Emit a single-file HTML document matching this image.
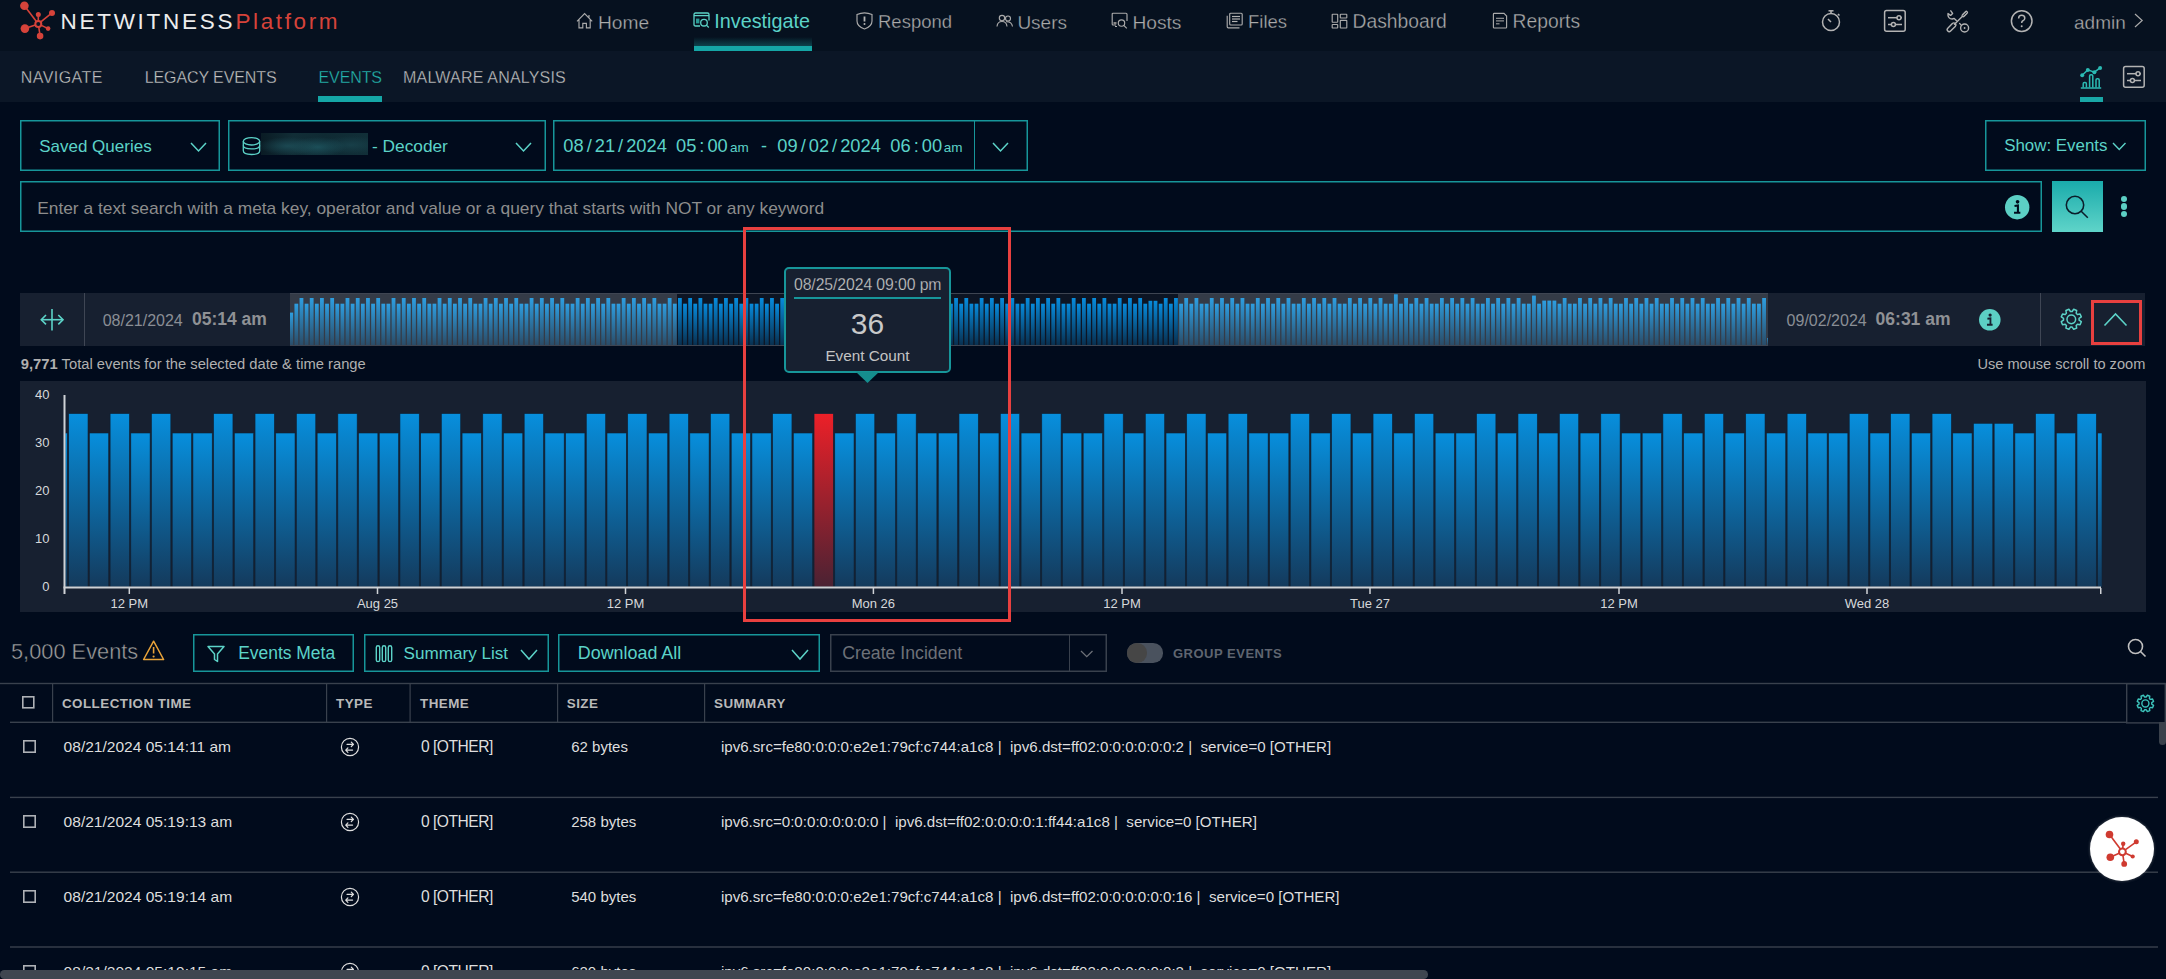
<!DOCTYPE html>
<html><head><meta charset="utf-8"><style>
html,body{margin:0;padding:0;width:2166px;height:979px;overflow:hidden;background:#010b1c;font-family:"Liberation Sans", sans-serif;}
.t{position:absolute;white-space:nowrap;line-height:1;font-family:"Liberation Sans", sans-serif;}
svg{overflow:visible}
</style></head><body>
<div style="position:absolute;left:0px;top:0px;width:2166px;height:51px;background:#06111f"></div><div style="position:absolute;left:0px;top:51px;width:2166px;height:51px;background:#0b1626"></div><svg style="position:absolute;left:0px;top:0px;" width="70" height="50" viewBox="0 0 70 50">
<g stroke="#d6433a" stroke-width="1.6" fill="none">
<line x1="24.4" y1="5.8" x2="38.3" y2="23.9"/><line x1="52" y1="12.9" x2="38.3" y2="23.9"/>
<line x1="38.3" y1="14.4" x2="38.3" y2="23.9"/><line x1="24.9" y1="28.6" x2="38.3" y2="23.9"/>
<line x1="48.1" y1="28.6" x2="38.3" y2="23.9"/><line x1="40.1" y1="36.1" x2="38.3" y2="23.9"/>
</g>
<circle cx="38.3" cy="23.9" r="3" stroke="#d6433a" stroke-width="2" fill="#0a1322"/>
<g fill="#d6433a">
<circle cx="24.4" cy="5.8" r="4.3"/><circle cx="52" cy="12.9" r="3"/><circle cx="38.3" cy="14.4" r="2.5"/>
<circle cx="24.9" cy="28.6" r="4.3"/><circle cx="48.1" cy="28.6" r="2.3"/><circle cx="40.1" cy="36.1" r="3.3"/>
</g></svg><div class="t" style="left:60.5px;top:11.45px;font-size:22.5px;color:#ececec;font-weight:400;letter-spacing:2.72px;">NETWITNESS</div><div class="t" style="left:235.5px;top:11.45px;font-size:22.5px;color:#d6433a;font-weight:400;letter-spacing:2.6px;">Platform</div><div class="t" style="left:598px;top:12.55px;font-size:19.2px;color:#ababab;font-weight:400;letter-spacing:0px;-webkit-text-stroke:0.3px #06111f;">Home</div><div class="t" style="left:714.3px;top:12.04px;font-size:19.8px;color:#5cd3c8;font-weight:400;letter-spacing:0px;">Investigate</div><div class="t" style="left:878px;top:13.14px;font-size:18.5px;color:#ababab;font-weight:400;letter-spacing:0px;-webkit-text-stroke:0.3px #06111f;">Respond</div><div class="t" style="left:1017.4px;top:12.72px;font-size:19px;color:#ababab;font-weight:400;letter-spacing:0px;-webkit-text-stroke:0.3px #06111f;">Users</div><div class="t" style="left:1132.4px;top:12.55px;font-size:19.2px;color:#ababab;font-weight:400;letter-spacing:0px;-webkit-text-stroke:0.3px #06111f;">Hosts</div><div class="t" style="left:1248px;top:13.14px;font-size:18.5px;color:#ababab;font-weight:400;letter-spacing:0px;-webkit-text-stroke:0.3px #06111f;">Files</div><div class="t" style="left:1352.5px;top:12.46px;font-size:19.3px;color:#ababab;font-weight:400;letter-spacing:0px;-webkit-text-stroke:0.3px #06111f;">Dashboard</div><div class="t" style="left:1512.6px;top:12.46px;font-size:19.3px;color:#ababab;font-weight:400;letter-spacing:0px;-webkit-text-stroke:0.3px #06111f;">Reports</div><div class="t" style="left:2074px;top:12.72px;font-size:19px;color:#ababab;font-weight:400;letter-spacing:0px;-webkit-text-stroke:0.3px #06111f;">admin</div><svg style="position:absolute;left:576px;top:12px;" width="18" height="18" viewBox="0 0 18 18"><path d="M1 9.3 L8.6 1.5 L16.2 9.3 M3 7.4 V15.9 H6.8 V11.3 H10.4 V15.9 H14.2 V7.4 M13 3 V5.6" fill="none" stroke="#ababab" stroke-width="1.15"/></svg><svg style="position:absolute;left:692px;top:11px;" width="19" height="19" viewBox="0 0 19 19"><g fill="none" stroke="#5cd3c8" stroke-width="1.3"><path d="M8 15 H3.5 Q2 15 2 13.5 V3.5 Q2 2 3.5 2 H15.5 Q17 2 17 3.5 V9.5"/><line x1="2" y1="4.6" x2="17" y2="4.6"/><circle cx="12" cy="11.7" r="3.3"/><line x1="14.4" y1="14.1" x2="16.8" y2="16.5"/></g><rect x="4" y="7.6" width="3.4" height="4.8" fill="#2a9a95"/></svg><div style="position:absolute;left:694px;top:37px;width:118px;height:9px;background:linear-gradient(to bottom, rgba(26,160,160,0), rgba(26,160,160,0.35))"></div><div style="position:absolute;left:694px;top:46px;width:118px;height:5.2px;background:#15a6a6"></div><svg style="position:absolute;left:855px;top:11px;" width="19" height="19" viewBox="0 0 19 19"><path d="M2 3.5 Q9.5 0.3 17 3.5 V10 Q17 15.5 9.5 18 Q2 15.5 2 10 Z" fill="none" stroke="#ababab" stroke-width="1.15"/><line x1="9.5" y1="5.5" x2="9.5" y2="10.5" stroke="#b3b3b3" stroke-width="1.8"/><circle cx="9.5" cy="13" r="1" fill="#b3b3b3"/></svg><svg style="position:absolute;left:996px;top:14px;" width="18" height="14" viewBox="0 0 18 14"><g fill="none" stroke="#ababab" stroke-width="1.15"><circle cx="6" cy="4" r="2.7"/><path d="M1 12.5 Q1.5 7.5 6 7.5 Q10.5 7.5 11 12.5"/><circle cx="12" cy="4.5" r="2.5"/><path d="M10 7.8 Q15.8 7.5 16.5 12.5"/></g></svg><svg style="position:absolute;left:1111px;top:12px;" width="18" height="18" viewBox="0 0 18 18"><g fill="none" stroke="#ababab" stroke-width="1.15"><path d="M5 13 H2 Q1.2 13 1.2 12 V2.2 Q1.2 1.2 2 1.2 H15 Q16 1.2 16 2.2 V9"/><circle cx="10.5" cy="11" r="3.2"/><line x1="12.8" y1="13.3" x2="15.8" y2="16.3"/></g><rect x="2.5" y="10" width="3" height="2.3" fill="#888"/><line x1="4" y1="14.5" x2="6" y2="14.5" stroke="#b3b3b3" stroke-width="1"/></svg><svg style="position:absolute;left:1226px;top:12px;" width="18" height="17" viewBox="0 0 18 17"><g fill="none" stroke="#ababab" stroke-width="1.15"><rect x="3.7" y="1.2" width="12.5" height="11.8" rx="1"/><path d="M1.2 3.8 V14.8 Q1.2 15.8 2.2 15.8 H13.5"/></g><g stroke="#b3b3b3" stroke-width="1.2"><line x1="6" y1="4.5" x2="14" y2="4.5"/><line x1="6" y1="7" x2="14" y2="7"/><line x1="6" y1="9.5" x2="11.5" y2="9.5"/></g></svg><svg style="position:absolute;left:1331px;top:13px;" width="17" height="16" viewBox="0 0 17 16"><g fill="none" stroke="#ababab" stroke-width="1.15"><rect x="1.2" y="1.2" width="5.5" height="8" rx="0.5"/><rect x="9.3" y="1.2" width="6.5" height="3.8" rx="0.5"/><rect x="1.2" y="11.5" width="5.5" height="3.5" rx="0.5"/><rect x="9.3" y="7.3" width="6.5" height="7.7" rx="0.5"/></g></svg><svg style="position:absolute;left:1492px;top:12px;" width="17" height="17" viewBox="0 0 17 17"><g fill="none" stroke="#ababab" stroke-width="1.15"><path d="M1.4 2.2 Q1.4 1.4 2.2 1.4 H12 L14.6 4 V15.2 Q14.6 16 13.8 16 H2.2 Q1.4 16 1.4 15.2 Z"/></g><g stroke="#a0a0a0" stroke-width="1.1"><line x1="4" y1="6.3" x2="12" y2="6.3"/><line x1="4" y1="8.9" x2="12" y2="8.9"/><line x1="4" y1="11.8" x2="7.5" y2="11.8"/></g></svg><svg style="position:absolute;left:1818px;top:8px;" width="26" height="26" viewBox="0 0 26 26"><g fill="none" stroke="#b3b3b3" stroke-width="1.5"><circle cx="13" cy="14" r="8.5"/><line x1="13" y1="2.8" x2="13" y2="5.5"/><line x1="10.5" y1="2.8" x2="15.5" y2="2.8"/><line x1="20" y1="6" x2="21.5" y2="7.5"/><line x1="10" y1="11" x2="13" y2="14"/></g></svg><svg style="position:absolute;left:1883px;top:9px;" width="24" height="24" viewBox="0 0 24 24"><g fill="none" stroke="#b3b3b3" stroke-width="1.5"><rect x="1.6" y="1.6" width="20.6" height="20.6" rx="2"/><line x1="5" y1="8.7" x2="19" y2="8.7"/><line x1="5" y1="15.5" x2="19" y2="15.5"/><circle cx="16" cy="8.7" r="2" fill="#06111f"/><circle cx="10.4" cy="15.5" r="2" fill="#06111f"/></g></svg><svg style="position:absolute;left:1946px;top:9px;" width="25" height="25" viewBox="0 0 25 25"><g stroke="#b3b3b3" fill="none" stroke-linecap="round"><line x1="3.2" y1="20.6" x2="7.8" y2="16" stroke-width="5.4"/><line x1="3.2" y1="20.6" x2="7.8" y2="16" stroke="#06111f" stroke-width="2.6"/><line x1="8.5" y1="15.3" x2="17.5" y2="6.3" stroke-width="1.4"/><line x1="17.3" y1="6.5" x2="20.3" y2="3.5" stroke-width="3.6"/><line x1="17.3" y1="6.5" x2="20.3" y2="3.5" stroke="#06111f" stroke-width="1"/><path d="M4.8 1.8 L6.6 4.4 L4.6 6.4 L2 4.6 Q1.6 8.4 4.4 9.6 Q6.4 10.4 8.2 9.4 L10.4 11.4" stroke-width="1.4" stroke-linejoin="round"/><path d="M13.6 14.4 L15.6 16.6" stroke-width="1.4"/><circle cx="18.6" cy="19" r="4" stroke-width="1.4"/><circle cx="18.6" cy="19" r="0.9" fill="#b3b3b3" stroke="none"/></g></svg><svg style="position:absolute;left:2009px;top:8px;" width="26" height="26" viewBox="0 0 26 26"><circle cx="12.7" cy="13.1" r="10.3" fill="none" stroke="#b3b3b3" stroke-width="1.5"/><path d="M9.6 10.5 Q9.6 7.3 12.7 7.3 Q15.8 7.3 15.8 10.2 Q15.8 12 13.6 13 Q12.7 13.5 12.7 15" fill="none" stroke="#b3b3b3" stroke-width="1.5"/><circle cx="12.7" cy="18.2" r="1" fill="#b3b3b3"/></svg><svg style="position:absolute;left:2133px;top:12px;" width="12" height="18" viewBox="0 0 12 18"><path d="M2 2 L9.2 8.5 L2 15" fill="none" stroke="#ababab" stroke-width="1.15"/></svg><div class="t" style="left:20.7px;top:69.56px;font-size:16px;color:#c4c4c4;font-weight:400;letter-spacing:0.45px;-webkit-text-stroke:0.3px #0b1626;">NAVIGATE</div><div class="t" style="left:144.7px;top:69.56px;font-size:16px;color:#c4c4c4;font-weight:400;letter-spacing:-0.1px;-webkit-text-stroke:0.3px #0b1626;">LEGACY EVENTS</div><div class="t" style="left:318.5px;top:69.56px;font-size:16px;color:#25b8b1;font-weight:400;letter-spacing:-0.1px;-webkit-text-stroke:0.3px #0b1626;">EVENTS</div><div class="t" style="left:403px;top:69.56px;font-size:16px;color:#c4c4c4;font-weight:400;letter-spacing:0.2px;-webkit-text-stroke:0.3px #0b1626;">MALWARE ANALYSIS</div><div style="position:absolute;left:318px;top:96.2px;width:64.4px;height:5.5px;background:#15a6a6"></div><svg style="position:absolute;left:2079px;top:64px;" width="26" height="26" viewBox="0 0 26 26"><g fill="none" stroke="#2bbab3" stroke-width="1.5"><polyline points="3.2,11.2 8.8,5.9 15.4,8.2 21.1,3.9"/><path d="M4.2 23.5 V19.8 Q4.2 18.6 5.4 18.6 H6.2 Q7.4 18.6 7.4 19.8 V23.5"/><path d="M10.6 23.5 V12 Q10.6 10.8 11.8 10.8 H12.6 Q13.8 10.8 13.8 12 V23.5"/><path d="M17 23.5 V16 Q17 14.8 18.2 14.8 H19 Q20.2 14.8 20.2 16 V23.5"/><line x1="1.8" y1="24" x2="22.2" y2="24"/></g><g fill="#2bbab3"><circle cx="3.2" cy="11.2" r="2"/><circle cx="8.8" cy="5.9" r="2"/><circle cx="15.4" cy="8.2" r="2"/><circle cx="21.1" cy="3.9" r="2"/></g></svg><div style="position:absolute;left:2079.7px;top:96.8px;width:23.3px;height:5.2px;background:#19a7a6"></div><svg style="position:absolute;left:2122px;top:65px;" width="24" height="24" viewBox="0 0 24 24"><g fill="none" stroke="#b3b3b3" stroke-width="1.5"><rect x="1.6" y="1.6" width="20.6" height="20.6" rx="2"/><line x1="5" y1="8.7" x2="19" y2="8.7"/><line x1="5" y1="15.5" x2="19" y2="15.5"/><circle cx="16" cy="8.7" r="2" fill="#0b1626"/><circle cx="10.4" cy="15.5" r="2" fill="#0b1626"/></g></svg><svg style="position:absolute;left:20px;top:120px;" width="200" height="51" viewBox="0 0 200 51"><rect x="0.75" y="0.75" width="198.5" height="49.5" fill="none" stroke="#17969a" stroke-width="1.5"/></svg><div class="t" style="left:39.2px;top:138.01px;font-size:17px;color:#5cd3c8;font-weight:400;letter-spacing:0px;">Saved Queries</div><svg style="position:absolute;left:189.0px;top:141.0px;" width="19" height="12" viewBox="0 0 19 12"><polyline points="2,2 9.5,10 17,2" fill="none" stroke="#5cd3c8" stroke-width="1.5"/></svg><svg style="position:absolute;left:228px;top:120px;" width="318" height="51" viewBox="0 0 318 51"><rect x="0.75" y="0.75" width="316.5" height="49.5" fill="none" stroke="#17969a" stroke-width="1.5"/></svg><svg style="position:absolute;left:242px;top:136px;" width="20" height="20" viewBox="0 0 20 20"><g fill="none" stroke="#5cd3c8" stroke-width="1.3"><ellipse cx="9.5" cy="5.3" rx="8.2" ry="3.7"/><path d="M1.3 5.3 V14.8 Q1.3 18.5 9.5 18.5 Q17.7 18.5 17.7 14.8 V5.3"/><path d="M1.3 9.6 Q1.3 12.9 9.5 12.9 Q17.7 12.9 17.7 9.6"/></g></svg><div style="position:absolute;left:261px;top:133px;width:107px;height:22px;background:radial-gradient(ellipse 30px 9px at 27px 13px, rgba(30,80,90,0.8), rgba(30,80,90,0) 100%), radial-gradient(ellipse 28px 10px at 57px 14px, rgba(30,85,95,0.85), rgba(30,80,90,0) 100%), radial-gradient(ellipse 30px 9px at 90px 12px, rgba(28,75,85,0.6), rgba(30,80,90,0) 100%), linear-gradient(90deg,#0a1b24,#112d36 30%,#0f2a33 60%,#112f38)"></div><div class="t" style="left:372px;top:137.76px;font-size:17.3px;color:#5cd3c8;font-weight:400;letter-spacing:0px;">- Decoder</div><svg style="position:absolute;left:513.5px;top:141.0px;" width="19" height="12" viewBox="0 0 19 12"><polyline points="2,2 9.5,10 17,2" fill="none" stroke="#5cd3c8" stroke-width="1.5"/></svg><svg style="position:absolute;left:553px;top:120px;" width="475" height="51" viewBox="0 0 475 51"><rect x="0.75" y="0.75" width="473.5" height="49.5" fill="none" stroke="#17969a" stroke-width="1.5"/></svg><div style="position:absolute;left:973.7px;top:120px;width:1.5px;height:51px;background:#17969a"></div><div class="t" style="left:563.3px;top:136.61px;font-size:18.3px;color:#5cd3c8;font-weight:400;letter-spacing:0px;">08<span style="margin:0 3px">/</span>21<span style="margin:0 3px">/</span>2024</div><div class="t" style="left:676px;top:136.61px;font-size:18.3px;color:#5cd3c8;font-weight:400;letter-spacing:0px;">05<span style="margin:0 3px">:</span>00</div><div class="t" style="left:730px;top:140.67px;font-size:13.5px;color:#5cd3c8;font-weight:400;letter-spacing:0px;">am</div><div class="t" style="left:761px;top:136.86px;font-size:18px;color:#5cd3c8;font-weight:400;letter-spacing:0px;">-</div><div class="t" style="left:777.3px;top:136.61px;font-size:18.3px;color:#5cd3c8;font-weight:400;letter-spacing:0px;">09<span style="margin:0 3px">/</span>02<span style="margin:0 3px">/</span>2024</div><div class="t" style="left:890.3px;top:136.61px;font-size:18.3px;color:#5cd3c8;font-weight:400;letter-spacing:0px;">06<span style="margin:0 3px">:</span>00</div><div class="t" style="left:943.8px;top:140.67px;font-size:13.5px;color:#5cd3c8;font-weight:400;letter-spacing:0px;">am</div><svg style="position:absolute;left:990.7px;top:141.0px;" width="19" height="12" viewBox="0 0 19 12"><polyline points="2,2 9.5,10 17,2" fill="none" stroke="#5cd3c8" stroke-width="1.5"/></svg><svg style="position:absolute;left:1985px;top:120px;" width="161" height="51" viewBox="0 0 161 51"><rect x="0.75" y="0.75" width="159.5" height="49.5" fill="none" stroke="#17969a" stroke-width="1.5"/></svg><div class="t" style="left:2004.2px;top:137.89px;font-size:16.9px;color:#5cd3c8;font-weight:400;letter-spacing:0px;">Show: Events</div><svg style="position:absolute;left:2111.15px;top:141.15px;" width="16.5" height="10.5" viewBox="0 0 16.5 10.5"><polyline points="2,2 8.25,8.5 14.5,2" fill="none" stroke="#5cd3c8" stroke-width="1.4"/></svg><svg style="position:absolute;left:20px;top:181px;" width="2022" height="51" viewBox="0 0 2022 51"><rect x="0.75" y="0.75" width="2020.5" height="49.5" fill="none" stroke="#17969a" stroke-width="1.5"/></svg><div class="t" style="left:37.2px;top:200.31px;font-size:17.35px;color:#8d8d8d;font-weight:400;letter-spacing:0px;">Enter a text search with a meta key, operator and value or a query that starts with NOT or any keyword</div><svg style="position:absolute;left:2003.7px;top:193.5px;" width="26.4" height="26.4" viewBox="0 0 26.4 26.4"><circle cx="13.2" cy="13.2" r="12.2" fill="#5ccfc4"/><circle cx="13.57" cy="7.83" r="1.83" fill="#010b1c"/><path d="M10.52 11.98 L13.93 11.49 V18.81 M10.03 18.81 H16.37" stroke="#010b1c" stroke-width="2.07" fill="none"/></svg><div style="position:absolute;left:2052px;top:181px;width:51px;height:51px;background:linear-gradient(to bottom,#1aabab,#5fd4c9)"></div><svg style="position:absolute;left:2060px;top:190px;" width="36" height="36" viewBox="0 0 36 36"><circle cx="15" cy="15" r="8.7" fill="none" stroke="#0b1d2a" stroke-width="1.55"/><line x1="21.2" y1="21.2" x2="27.8" y2="27.8" stroke="#0b1d2a" stroke-width="1.55"/></svg><div style="position:absolute;left:2120.5px;top:195.89999999999998px;width:6.6px;height:6.6px;border-radius:50%;background:#5ccfc4"></div><div style="position:absolute;left:2120.5px;top:203.39999999999998px;width:6.6px;height:6.6px;border-radius:50%;background:#5ccfc4"></div><div style="position:absolute;left:2120.5px;top:210.89999999999998px;width:6.6px;height:6.6px;border-radius:50%;background:#5ccfc4"></div><div style="position:absolute;left:20px;top:293px;width:2125px;height:53px;background:#172030"></div><svg style="position:absolute;left:38px;top:306px;" width="28" height="28" viewBox="0 0 28 28"><g fill="none" stroke="#5cd3c8" stroke-width="1.6"><line x1="14" y1="3" x2="14" y2="24.5"/><line x1="3.3" y1="13.7" x2="25" y2="13.7"/><polyline points="8,9 3.3,13.7 8,18.4"/><polyline points="20.3,9 25,13.7 20.3,18.4"/></g></svg><div style="position:absolute;left:84px;top:293px;width:1px;height:53px;background:#3f4654"></div><div class="t" style="left:102.7px;top:312.76px;font-size:16px;color:#8a8e95;font-weight:400;letter-spacing:0px;">08/21/2024</div><div class="t" style="left:192px;top:311.49px;font-size:17.5px;color:#8f9195;font-weight:700;letter-spacing:0px;">05:14 am</div><div class="t" style="left:1786.6px;top:312.76px;font-size:16px;color:#8a8e95;font-weight:400;letter-spacing:0px;">09/02/2024</div><div class="t" style="left:1875.6px;top:311.49px;font-size:17.5px;color:#8f9195;font-weight:700;letter-spacing:0px;">06:31 am</div><svg style="position:absolute;left:1978.3px;top:307.7px;" width="23.6" height="23.6" viewBox="0 0 23.6 23.6"><circle cx="11.8" cy="11.8" r="10.8" fill="#5ccfc4"/><circle cx="12.12" cy="7.05" r="1.62" fill="#172030"/><path d="M9.42 10.72 L12.45 10.29 V16.77 M8.99 16.77 H14.61" stroke="#172030" stroke-width="1.84" fill="none"/></svg><div style="position:absolute;left:2040px;top:293px;width:1px;height:53px;background:#3f4654"></div><svg style="position:absolute;left:290px;top:293px;" width="1478" height="53" viewBox="0 0 1478 53"><defs><linearGradient id="mg1" x1="0" y1="0" x2="0" y2="1"><stop offset="0" stop-color="#2e9ee0"/><stop offset="1" stop-color="#2a4c68"/></linearGradient><linearGradient id="mg2" x1="0" y1="0" x2="0" y2="1"><stop offset="0" stop-color="#078bdc"/><stop offset="1" stop-color="#083050"/></linearGradient></defs><rect x="0" y="0" width="1478" height="53" fill="#343b47"/><rect x="387" y="1" width="501" height="51" fill="#0d1524"/><rect x="0.00" y="19.60" width="3.14" height="32.40" fill="url(#mg1)"/><rect x="4.45" y="10.70" width="3.80" height="41.30" fill="url(#mg1)"/><rect x="9.56" y="5.00" width="3.80" height="47.00" fill="url(#mg1)"/><rect x="14.68" y="10.70" width="3.80" height="41.30" fill="url(#mg1)"/><rect x="19.79" y="5.00" width="3.80" height="47.00" fill="url(#mg1)"/><rect x="24.91" y="10.70" width="3.80" height="41.30" fill="url(#mg1)"/><rect x="30.02" y="5.00" width="3.80" height="47.00" fill="url(#mg1)"/><rect x="35.13" y="10.70" width="3.80" height="41.30" fill="url(#mg1)"/><rect x="40.25" y="5.00" width="3.80" height="47.00" fill="url(#mg1)"/><rect x="45.36" y="10.70" width="3.80" height="41.30" fill="url(#mg1)"/><rect x="50.48" y="10.70" width="3.80" height="41.30" fill="url(#mg1)"/><rect x="55.59" y="5.00" width="3.80" height="47.00" fill="url(#mg1)"/><rect x="60.70" y="10.70" width="3.80" height="41.30" fill="url(#mg1)"/><rect x="65.82" y="5.00" width="3.80" height="47.00" fill="url(#mg1)"/><rect x="70.93" y="10.70" width="3.80" height="41.30" fill="url(#mg1)"/><rect x="76.05" y="5.00" width="3.80" height="47.00" fill="url(#mg1)"/><rect x="81.16" y="10.70" width="3.80" height="41.30" fill="url(#mg1)"/><rect x="86.27" y="5.00" width="3.80" height="47.00" fill="url(#mg1)"/><rect x="91.39" y="10.70" width="3.80" height="41.30" fill="url(#mg1)"/><rect x="96.50" y="10.70" width="3.80" height="41.30" fill="url(#mg1)"/><rect x="101.62" y="5.00" width="3.80" height="47.00" fill="url(#mg1)"/><rect x="106.73" y="10.70" width="3.80" height="41.30" fill="url(#mg1)"/><rect x="111.84" y="5.00" width="3.80" height="47.00" fill="url(#mg1)"/><rect x="116.96" y="10.70" width="3.80" height="41.30" fill="url(#mg1)"/><rect x="122.07" y="5.00" width="3.80" height="47.00" fill="url(#mg1)"/><rect x="127.19" y="10.70" width="3.80" height="41.30" fill="url(#mg1)"/><rect x="132.30" y="5.00" width="3.80" height="47.00" fill="url(#mg1)"/><rect x="137.41" y="10.70" width="3.80" height="41.30" fill="url(#mg1)"/><rect x="142.53" y="10.70" width="3.80" height="41.30" fill="url(#mg1)"/><rect x="147.64" y="5.00" width="3.80" height="47.00" fill="url(#mg1)"/><rect x="152.76" y="10.70" width="3.80" height="41.30" fill="url(#mg1)"/><rect x="157.87" y="5.00" width="3.80" height="47.00" fill="url(#mg1)"/><rect x="162.98" y="10.70" width="3.80" height="41.30" fill="url(#mg1)"/><rect x="168.10" y="5.00" width="3.80" height="47.00" fill="url(#mg1)"/><rect x="173.21" y="10.70" width="3.80" height="41.30" fill="url(#mg1)"/><rect x="178.33" y="5.00" width="3.80" height="47.00" fill="url(#mg1)"/><rect x="183.44" y="10.70" width="3.80" height="41.30" fill="url(#mg1)"/><rect x="188.55" y="10.70" width="3.80" height="41.30" fill="url(#mg1)"/><rect x="193.67" y="5.00" width="3.80" height="47.00" fill="url(#mg1)"/><rect x="198.78" y="10.70" width="3.80" height="41.30" fill="url(#mg1)"/><rect x="203.90" y="5.00" width="3.80" height="47.00" fill="url(#mg1)"/><rect x="209.01" y="10.70" width="3.80" height="41.30" fill="url(#mg1)"/><rect x="214.12" y="5.00" width="3.80" height="47.00" fill="url(#mg1)"/><rect x="219.24" y="10.70" width="3.80" height="41.30" fill="url(#mg1)"/><rect x="224.35" y="5.00" width="3.80" height="47.00" fill="url(#mg1)"/><rect x="229.47" y="10.70" width="3.80" height="41.30" fill="url(#mg1)"/><rect x="234.58" y="10.70" width="3.80" height="41.30" fill="url(#mg1)"/><rect x="239.69" y="5.00" width="3.80" height="47.00" fill="url(#mg1)"/><rect x="244.81" y="10.70" width="3.80" height="41.30" fill="url(#mg1)"/><rect x="249.92" y="5.00" width="3.80" height="47.00" fill="url(#mg1)"/><rect x="255.04" y="10.70" width="3.80" height="41.30" fill="url(#mg1)"/><rect x="260.15" y="5.00" width="3.80" height="47.00" fill="url(#mg1)"/><rect x="265.26" y="10.70" width="3.80" height="41.30" fill="url(#mg1)"/><rect x="270.38" y="5.00" width="3.80" height="47.00" fill="url(#mg1)"/><rect x="275.49" y="10.70" width="3.80" height="41.30" fill="url(#mg1)"/><rect x="280.61" y="10.70" width="3.80" height="41.30" fill="url(#mg1)"/><rect x="285.72" y="5.00" width="3.80" height="47.00" fill="url(#mg1)"/><rect x="290.83" y="10.70" width="3.80" height="41.30" fill="url(#mg1)"/><rect x="295.95" y="5.00" width="3.80" height="47.00" fill="url(#mg1)"/><rect x="301.06" y="10.70" width="3.80" height="41.30" fill="url(#mg1)"/><rect x="306.18" y="5.00" width="3.80" height="47.00" fill="url(#mg1)"/><rect x="311.29" y="10.70" width="3.80" height="41.30" fill="url(#mg1)"/><rect x="316.40" y="5.00" width="3.80" height="47.00" fill="url(#mg1)"/><rect x="321.52" y="10.70" width="3.80" height="41.30" fill="url(#mg1)"/><rect x="326.63" y="10.70" width="3.80" height="41.30" fill="url(#mg1)"/><rect x="331.75" y="5.00" width="3.80" height="47.00" fill="url(#mg1)"/><rect x="336.86" y="10.70" width="3.80" height="41.30" fill="url(#mg1)"/><rect x="341.97" y="5.00" width="3.80" height="47.00" fill="url(#mg1)"/><rect x="347.09" y="10.70" width="3.80" height="41.30" fill="url(#mg1)"/><rect x="352.20" y="5.00" width="3.80" height="47.00" fill="url(#mg1)"/><rect x="357.32" y="10.70" width="3.80" height="41.30" fill="url(#mg1)"/><rect x="362.43" y="5.00" width="3.80" height="47.00" fill="url(#mg1)"/><rect x="367.54" y="10.70" width="3.80" height="41.30" fill="url(#mg1)"/><rect x="372.66" y="10.70" width="3.80" height="41.30" fill="url(#mg1)"/><rect x="377.77" y="5.00" width="3.80" height="47.00" fill="url(#mg1)"/><rect x="382.89" y="10.70" width="3.80" height="41.30" fill="url(#mg1)"/><rect x="388.00" y="5.00" width="3.80" height="47.00" fill="url(#mg2)"/><rect x="393.11" y="10.70" width="3.80" height="41.30" fill="url(#mg2)"/><rect x="398.23" y="5.00" width="3.80" height="47.00" fill="url(#mg2)"/><rect x="403.34" y="10.70" width="3.80" height="41.30" fill="url(#mg2)"/><rect x="408.46" y="5.00" width="3.80" height="47.00" fill="url(#mg2)"/><rect x="413.57" y="10.70" width="3.80" height="41.30" fill="url(#mg2)"/><rect x="418.68" y="10.70" width="3.80" height="41.30" fill="url(#mg2)"/><rect x="423.80" y="5.00" width="3.80" height="47.00" fill="url(#mg2)"/><rect x="428.91" y="10.70" width="3.80" height="41.30" fill="url(#mg2)"/><rect x="434.03" y="5.00" width="3.80" height="47.00" fill="url(#mg2)"/><rect x="439.14" y="10.70" width="3.80" height="41.30" fill="url(#mg2)"/><rect x="444.25" y="5.00" width="3.80" height="47.00" fill="url(#mg2)"/><rect x="449.37" y="10.70" width="3.80" height="41.30" fill="url(#mg2)"/><rect x="454.48" y="5.00" width="3.80" height="47.00" fill="url(#mg2)"/><rect x="459.60" y="10.70" width="3.80" height="41.30" fill="url(#mg2)"/><rect x="464.71" y="10.70" width="3.80" height="41.30" fill="url(#mg2)"/><rect x="469.82" y="5.00" width="3.80" height="47.00" fill="url(#mg2)"/><rect x="474.94" y="10.70" width="3.80" height="41.30" fill="url(#mg2)"/><rect x="480.05" y="5.00" width="3.80" height="47.00" fill="url(#mg2)"/><rect x="485.17" y="10.70" width="3.80" height="41.30" fill="url(#mg2)"/><rect x="490.28" y="5.00" width="3.80" height="47.00" fill="url(#mg2)"/><rect x="495.39" y="10.70" width="3.80" height="41.30" fill="url(#mg2)"/><rect x="500.51" y="5.00" width="3.80" height="47.00" fill="url(#mg2)"/><rect x="505.62" y="10.70" width="3.80" height="41.30" fill="url(#mg2)"/><rect x="510.74" y="10.70" width="3.80" height="41.30" fill="url(#mg2)"/><rect x="515.85" y="5.00" width="3.80" height="47.00" fill="url(#mg2)"/><rect x="520.96" y="10.70" width="3.80" height="41.30" fill="url(#mg2)"/><rect x="526.08" y="5.00" width="3.80" height="47.00" fill="url(#mg2)"/><rect x="531.19" y="10.70" width="3.80" height="41.30" fill="url(#mg2)"/><rect x="536.31" y="5.00" width="3.80" height="47.00" fill="url(#mg2)"/><rect x="541.42" y="10.70" width="3.80" height="41.30" fill="url(#mg2)"/><rect x="546.53" y="5.00" width="3.80" height="47.00" fill="url(#mg2)"/><rect x="551.65" y="10.70" width="3.80" height="41.30" fill="url(#mg2)"/><rect x="556.76" y="10.70" width="3.80" height="41.30" fill="url(#mg2)"/><rect x="561.88" y="5.00" width="3.80" height="47.00" fill="url(#mg2)"/><rect x="566.99" y="10.70" width="3.80" height="41.30" fill="url(#mg2)"/><rect x="572.10" y="5.00" width="3.80" height="47.00" fill="url(#mg2)"/><rect x="577.22" y="10.70" width="3.80" height="41.30" fill="url(#mg2)"/><rect x="582.33" y="5.00" width="3.80" height="47.00" fill="url(#mg2)"/><rect x="587.45" y="10.70" width="3.80" height="41.30" fill="url(#mg2)"/><rect x="592.56" y="5.00" width="3.80" height="47.00" fill="url(#mg2)"/><rect x="597.67" y="10.70" width="3.80" height="41.30" fill="url(#mg2)"/><rect x="602.79" y="10.70" width="3.80" height="41.30" fill="url(#mg2)"/><rect x="607.90" y="5.00" width="3.80" height="47.00" fill="url(#mg2)"/><rect x="613.02" y="10.70" width="3.80" height="41.30" fill="url(#mg2)"/><rect x="618.13" y="5.00" width="3.80" height="47.00" fill="url(#mg2)"/><rect x="623.24" y="10.70" width="3.80" height="41.30" fill="url(#mg2)"/><rect x="628.36" y="5.00" width="3.80" height="47.00" fill="url(#mg2)"/><rect x="633.47" y="10.70" width="3.80" height="41.30" fill="url(#mg2)"/><rect x="638.59" y="10.70" width="3.80" height="41.30" fill="url(#mg2)"/><rect x="643.70" y="5.00" width="3.80" height="47.00" fill="url(#mg2)"/><rect x="648.81" y="10.70" width="3.80" height="41.30" fill="url(#mg2)"/><rect x="653.93" y="5.00" width="3.80" height="47.00" fill="url(#mg2)"/><rect x="659.04" y="10.70" width="3.80" height="41.30" fill="url(#mg2)"/><rect x="664.16" y="5.00" width="3.80" height="47.00" fill="url(#mg2)"/><rect x="669.27" y="10.70" width="3.80" height="41.30" fill="url(#mg2)"/><rect x="674.38" y="5.00" width="3.80" height="47.00" fill="url(#mg2)"/><rect x="679.50" y="10.70" width="3.80" height="41.30" fill="url(#mg2)"/><rect x="684.61" y="10.70" width="3.80" height="41.30" fill="url(#mg2)"/><rect x="689.73" y="5.00" width="3.80" height="47.00" fill="url(#mg2)"/><rect x="694.84" y="10.70" width="3.80" height="41.30" fill="url(#mg2)"/><rect x="699.95" y="5.00" width="3.80" height="47.00" fill="url(#mg2)"/><rect x="705.07" y="10.70" width="3.80" height="41.30" fill="url(#mg2)"/><rect x="710.18" y="5.00" width="3.80" height="47.00" fill="url(#mg2)"/><rect x="715.30" y="10.70" width="3.80" height="41.30" fill="url(#mg2)"/><rect x="720.41" y="5.00" width="3.80" height="47.00" fill="url(#mg2)"/><rect x="725.52" y="10.70" width="3.80" height="41.30" fill="url(#mg2)"/><rect x="730.64" y="10.70" width="3.80" height="41.30" fill="url(#mg2)"/><rect x="735.75" y="5.00" width="3.80" height="47.00" fill="url(#mg2)"/><rect x="740.87" y="10.70" width="3.80" height="41.30" fill="url(#mg2)"/><rect x="745.98" y="5.00" width="3.80" height="47.00" fill="url(#mg2)"/><rect x="751.09" y="10.70" width="3.80" height="41.30" fill="url(#mg2)"/><rect x="756.21" y="5.00" width="3.80" height="47.00" fill="url(#mg2)"/><rect x="761.32" y="10.70" width="3.80" height="41.30" fill="url(#mg2)"/><rect x="766.44" y="5.00" width="3.80" height="47.00" fill="url(#mg2)"/><rect x="771.55" y="10.70" width="3.80" height="41.30" fill="url(#mg2)"/><rect x="776.66" y="10.70" width="3.80" height="41.30" fill="url(#mg2)"/><rect x="781.78" y="5.00" width="3.80" height="47.00" fill="url(#mg2)"/><rect x="786.89" y="10.70" width="3.80" height="41.30" fill="url(#mg2)"/><rect x="792.01" y="5.00" width="3.80" height="47.00" fill="url(#mg2)"/><rect x="797.12" y="10.70" width="3.80" height="41.30" fill="url(#mg2)"/><rect x="802.23" y="5.00" width="3.80" height="47.00" fill="url(#mg2)"/><rect x="807.35" y="10.70" width="3.80" height="41.30" fill="url(#mg2)"/><rect x="812.46" y="5.00" width="3.80" height="47.00" fill="url(#mg2)"/><rect x="817.58" y="10.70" width="3.80" height="41.30" fill="url(#mg2)"/><rect x="822.69" y="10.70" width="3.80" height="41.30" fill="url(#mg2)"/><rect x="827.80" y="5.00" width="3.80" height="47.00" fill="url(#mg2)"/><rect x="832.92" y="10.70" width="3.80" height="41.30" fill="url(#mg2)"/><rect x="838.03" y="5.00" width="3.80" height="47.00" fill="url(#mg2)"/><rect x="843.15" y="10.70" width="3.80" height="41.30" fill="url(#mg2)"/><rect x="848.26" y="5.00" width="3.80" height="47.00" fill="url(#mg2)"/><rect x="853.37" y="10.70" width="3.80" height="41.30" fill="url(#mg2)"/><rect x="858.49" y="7.80" width="3.80" height="44.20" fill="url(#mg2)"/><rect x="863.60" y="7.80" width="3.80" height="44.20" fill="url(#mg2)"/><rect x="868.72" y="10.70" width="3.80" height="41.30" fill="url(#mg2)"/><rect x="873.83" y="5.00" width="3.80" height="47.00" fill="url(#mg2)"/><rect x="878.94" y="10.70" width="3.80" height="41.30" fill="url(#mg2)"/><rect x="884.06" y="5.00" width="3.80" height="47.00" fill="url(#mg2)"/><rect x="889.17" y="10.70" width="3.80" height="41.30" fill="url(#mg1)"/><rect x="894.29" y="5.00" width="3.80" height="47.00" fill="url(#mg1)"/><rect x="899.40" y="10.70" width="3.80" height="41.30" fill="url(#mg1)"/><rect x="904.51" y="5.00" width="3.80" height="47.00" fill="url(#mg1)"/><rect x="909.63" y="10.70" width="3.80" height="41.30" fill="url(#mg1)"/><rect x="914.74" y="10.70" width="3.80" height="41.30" fill="url(#mg1)"/><rect x="919.86" y="5.00" width="3.80" height="47.00" fill="url(#mg1)"/><rect x="924.97" y="10.70" width="3.80" height="41.30" fill="url(#mg1)"/><rect x="930.08" y="5.00" width="3.80" height="47.00" fill="url(#mg1)"/><rect x="935.20" y="10.70" width="3.80" height="41.30" fill="url(#mg1)"/><rect x="940.31" y="5.00" width="3.80" height="47.00" fill="url(#mg1)"/><rect x="945.43" y="10.70" width="3.80" height="41.30" fill="url(#mg1)"/><rect x="950.54" y="5.00" width="3.80" height="47.00" fill="url(#mg1)"/><rect x="955.65" y="10.70" width="3.80" height="41.30" fill="url(#mg1)"/><rect x="960.77" y="10.70" width="3.80" height="41.30" fill="url(#mg1)"/><rect x="965.88" y="5.00" width="3.80" height="47.00" fill="url(#mg1)"/><rect x="971.00" y="10.70" width="3.80" height="41.30" fill="url(#mg1)"/><rect x="976.11" y="5.00" width="3.80" height="47.00" fill="url(#mg1)"/><rect x="981.22" y="10.70" width="3.80" height="41.30" fill="url(#mg1)"/><rect x="986.34" y="5.00" width="3.80" height="47.00" fill="url(#mg1)"/><rect x="991.45" y="10.70" width="3.80" height="41.30" fill="url(#mg1)"/><rect x="996.57" y="5.00" width="3.80" height="47.00" fill="url(#mg1)"/><rect x="1001.68" y="10.70" width="3.80" height="41.30" fill="url(#mg1)"/><rect x="1006.79" y="10.70" width="3.80" height="41.30" fill="url(#mg1)"/><rect x="1011.91" y="5.00" width="3.80" height="47.00" fill="url(#mg1)"/><rect x="1017.02" y="10.70" width="3.80" height="41.30" fill="url(#mg1)"/><rect x="1022.14" y="5.00" width="3.80" height="47.00" fill="url(#mg1)"/><rect x="1027.25" y="10.70" width="3.80" height="41.30" fill="url(#mg1)"/><rect x="1032.36" y="5.00" width="3.80" height="47.00" fill="url(#mg1)"/><rect x="1037.48" y="10.70" width="3.80" height="41.30" fill="url(#mg1)"/><rect x="1042.59" y="5.00" width="3.80" height="47.00" fill="url(#mg1)"/><rect x="1047.71" y="10.70" width="3.80" height="41.30" fill="url(#mg1)"/><rect x="1052.82" y="10.70" width="3.80" height="41.30" fill="url(#mg1)"/><rect x="1057.93" y="5.00" width="3.80" height="47.00" fill="url(#mg1)"/><rect x="1063.05" y="10.70" width="3.80" height="41.30" fill="url(#mg1)"/><rect x="1068.16" y="5.00" width="3.80" height="47.00" fill="url(#mg1)"/><rect x="1073.28" y="10.70" width="3.80" height="41.30" fill="url(#mg1)"/><rect x="1078.39" y="5.00" width="3.80" height="47.00" fill="url(#mg1)"/><rect x="1083.50" y="10.70" width="3.80" height="41.30" fill="url(#mg1)"/><rect x="1088.62" y="5.00" width="3.80" height="47.00" fill="url(#mg1)"/><rect x="1093.73" y="10.70" width="3.80" height="41.30" fill="url(#mg1)"/><rect x="1098.85" y="10.70" width="3.80" height="41.30" fill="url(#mg1)"/><rect x="1103.96" y="1.30" width="3.80" height="50.70" fill="url(#mg1)"/><rect x="1109.07" y="10.70" width="3.80" height="41.30" fill="url(#mg1)"/><rect x="1114.19" y="5.00" width="3.80" height="47.00" fill="url(#mg1)"/><rect x="1119.30" y="10.70" width="3.80" height="41.30" fill="url(#mg1)"/><rect x="1124.42" y="5.00" width="3.80" height="47.00" fill="url(#mg1)"/><rect x="1129.53" y="10.70" width="3.80" height="41.30" fill="url(#mg1)"/><rect x="1134.64" y="5.00" width="3.80" height="47.00" fill="url(#mg1)"/><rect x="1139.76" y="10.70" width="3.80" height="41.30" fill="url(#mg1)"/><rect x="1144.87" y="10.70" width="3.80" height="41.30" fill="url(#mg1)"/><rect x="1149.99" y="5.00" width="3.80" height="47.00" fill="url(#mg1)"/><rect x="1155.10" y="10.70" width="3.80" height="41.30" fill="url(#mg1)"/><rect x="1160.21" y="5.00" width="3.80" height="47.00" fill="url(#mg1)"/><rect x="1165.33" y="10.70" width="3.80" height="41.30" fill="url(#mg1)"/><rect x="1170.44" y="5.00" width="3.80" height="47.00" fill="url(#mg1)"/><rect x="1175.56" y="10.70" width="3.80" height="41.30" fill="url(#mg1)"/><rect x="1180.67" y="5.00" width="3.80" height="47.00" fill="url(#mg1)"/><rect x="1185.78" y="10.70" width="3.80" height="41.30" fill="url(#mg1)"/><rect x="1190.90" y="10.70" width="3.80" height="41.30" fill="url(#mg1)"/><rect x="1196.01" y="5.00" width="3.80" height="47.00" fill="url(#mg1)"/><rect x="1201.13" y="10.70" width="3.80" height="41.30" fill="url(#mg1)"/><rect x="1206.24" y="5.00" width="3.80" height="47.00" fill="url(#mg1)"/><rect x="1211.35" y="10.70" width="3.80" height="41.30" fill="url(#mg1)"/><rect x="1216.47" y="5.00" width="3.80" height="47.00" fill="url(#mg1)"/><rect x="1221.58" y="10.70" width="3.80" height="41.30" fill="url(#mg1)"/><rect x="1226.70" y="5.00" width="3.80" height="47.00" fill="url(#mg1)"/><rect x="1231.81" y="10.70" width="3.80" height="41.30" fill="url(#mg1)"/><rect x="1236.92" y="10.70" width="3.80" height="41.30" fill="url(#mg1)"/><rect x="1242.04" y="2.60" width="3.80" height="49.40" fill="url(#mg1)"/><rect x="1247.15" y="10.70" width="3.80" height="41.30" fill="url(#mg1)"/><rect x="1252.27" y="7.60" width="3.80" height="44.40" fill="url(#mg1)"/><rect x="1257.38" y="7.60" width="3.80" height="44.40" fill="url(#mg1)"/><rect x="1262.49" y="7.60" width="3.80" height="44.40" fill="url(#mg1)"/><rect x="1267.61" y="10.70" width="3.80" height="41.30" fill="url(#mg1)"/><rect x="1272.72" y="5.00" width="3.80" height="47.00" fill="url(#mg1)"/><rect x="1277.84" y="10.70" width="3.80" height="41.30" fill="url(#mg1)"/><rect x="1282.95" y="10.70" width="3.80" height="41.30" fill="url(#mg1)"/><rect x="1288.06" y="5.00" width="3.80" height="47.00" fill="url(#mg1)"/><rect x="1293.18" y="10.70" width="3.80" height="41.30" fill="url(#mg1)"/><rect x="1298.29" y="5.00" width="3.80" height="47.00" fill="url(#mg1)"/><rect x="1303.41" y="10.70" width="3.80" height="41.30" fill="url(#mg1)"/><rect x="1308.52" y="5.00" width="3.80" height="47.00" fill="url(#mg1)"/><rect x="1313.63" y="10.70" width="3.80" height="41.30" fill="url(#mg1)"/><rect x="1318.75" y="5.00" width="3.80" height="47.00" fill="url(#mg1)"/><rect x="1323.86" y="10.70" width="3.80" height="41.30" fill="url(#mg1)"/><rect x="1328.98" y="10.70" width="3.80" height="41.30" fill="url(#mg1)"/><rect x="1334.09" y="5.00" width="3.80" height="47.00" fill="url(#mg1)"/><rect x="1339.20" y="10.70" width="3.80" height="41.30" fill="url(#mg1)"/><rect x="1344.32" y="5.00" width="3.80" height="47.00" fill="url(#mg1)"/><rect x="1349.43" y="10.70" width="3.80" height="41.30" fill="url(#mg1)"/><rect x="1354.55" y="5.00" width="3.80" height="47.00" fill="url(#mg1)"/><rect x="1359.66" y="10.70" width="3.80" height="41.30" fill="url(#mg1)"/><rect x="1364.77" y="5.00" width="3.80" height="47.00" fill="url(#mg1)"/><rect x="1369.89" y="10.70" width="3.80" height="41.30" fill="url(#mg1)"/><rect x="1375.00" y="10.70" width="3.80" height="41.30" fill="url(#mg1)"/><rect x="1380.12" y="5.00" width="3.80" height="47.00" fill="url(#mg1)"/><rect x="1385.23" y="10.70" width="3.80" height="41.30" fill="url(#mg1)"/><rect x="1390.34" y="5.00" width="3.80" height="47.00" fill="url(#mg1)"/><rect x="1395.46" y="10.70" width="3.80" height="41.30" fill="url(#mg1)"/><rect x="1400.57" y="5.00" width="3.80" height="47.00" fill="url(#mg1)"/><rect x="1405.69" y="10.70" width="3.80" height="41.30" fill="url(#mg1)"/><rect x="1410.80" y="5.00" width="3.80" height="47.00" fill="url(#mg1)"/><rect x="1415.91" y="10.70" width="3.80" height="41.30" fill="url(#mg1)"/><rect x="1421.03" y="10.70" width="3.80" height="41.30" fill="url(#mg1)"/><rect x="1426.14" y="5.00" width="3.80" height="47.00" fill="url(#mg1)"/><rect x="1431.26" y="10.70" width="3.80" height="41.30" fill="url(#mg1)"/><rect x="1436.37" y="5.00" width="3.80" height="47.00" fill="url(#mg1)"/><rect x="1441.48" y="10.70" width="3.80" height="41.30" fill="url(#mg1)"/><rect x="1446.60" y="5.00" width="3.80" height="47.00" fill="url(#mg1)"/><rect x="1451.71" y="10.70" width="3.80" height="41.30" fill="url(#mg1)"/><rect x="1456.83" y="5.00" width="3.80" height="47.00" fill="url(#mg1)"/><rect x="1461.94" y="10.70" width="3.80" height="41.30" fill="url(#mg1)"/><rect x="1467.05" y="10.70" width="3.80" height="41.30" fill="url(#mg1)"/><rect x="1472.17" y="5.00" width="3.80" height="47.00" fill="url(#mg1)"/><rect x="1477.28" y="45.00" width="0.72" height="7.00" fill="url(#mg1)"/><rect x="0" y="0" width="1478" height="1" fill="#3e4552"/><rect x="0" y="52" width="1478" height="1" fill="#3e4552"/></svg><div class="t" style="left:20.8px;top:356.51px;font-size:14.75px;color:#b0b0b0;font-weight:400;letter-spacing:0px;"><b style="font-weight:700">9,771</b> Total events for the selected date &amp; time range</div><div class="t" style="right:20.699999999999818px;top:356.64px;font-size:14.6px;color:#b0b0b0;font-weight:400;letter-spacing:0px;">Use mouse scroll to zoom</div><div style="position:absolute;left:20px;top:381px;width:2126px;height:231px;background:#172030"></div><svg style="position:absolute;left:20px;top:381px;" width="2125" height="230" viewBox="0 0 2125 230"><defs><linearGradient id="bg1" x1="0" y1="0" x2="0" y2="1"><stop offset="0" stop-color="#078fdd"/><stop offset="1" stop-color="#143a5c"/></linearGradient><linearGradient id="bg2" x1="0" y1="0" x2="0" y2="1"><stop offset="0" stop-color="#ec2028"/><stop offset="1" stop-color="#4a2233"/></linearGradient></defs><rect x="45.00" y="52.00" width="2.30" height="154.00" fill="url(#bg1)" stroke="#0e2236" stroke-width="0.6"/><rect x="48.70" y="32.60" width="19.30" height="173.40" fill="url(#bg1)" stroke="#0e2236" stroke-width="0.6"/><rect x="69.40" y="52.00" width="19.30" height="154.00" fill="url(#bg1)" stroke="#0e2236" stroke-width="0.6"/><rect x="90.11" y="32.60" width="19.30" height="173.40" fill="url(#bg1)" stroke="#0e2236" stroke-width="0.6"/><rect x="110.81" y="52.00" width="19.30" height="154.00" fill="url(#bg1)" stroke="#0e2236" stroke-width="0.6"/><rect x="131.52" y="32.60" width="19.30" height="173.40" fill="url(#bg1)" stroke="#0e2236" stroke-width="0.6"/><rect x="152.22" y="52.00" width="19.30" height="154.00" fill="url(#bg1)" stroke="#0e2236" stroke-width="0.6"/><rect x="172.92" y="52.00" width="19.30" height="154.00" fill="url(#bg1)" stroke="#0e2236" stroke-width="0.6"/><rect x="193.63" y="32.60" width="19.30" height="173.40" fill="url(#bg1)" stroke="#0e2236" stroke-width="0.6"/><rect x="214.33" y="52.00" width="19.30" height="154.00" fill="url(#bg1)" stroke="#0e2236" stroke-width="0.6"/><rect x="235.04" y="32.60" width="19.30" height="173.40" fill="url(#bg1)" stroke="#0e2236" stroke-width="0.6"/><rect x="255.74" y="52.00" width="19.30" height="154.00" fill="url(#bg1)" stroke="#0e2236" stroke-width="0.6"/><rect x="276.44" y="32.60" width="19.30" height="173.40" fill="url(#bg1)" stroke="#0e2236" stroke-width="0.6"/><rect x="297.15" y="52.00" width="19.30" height="154.00" fill="url(#bg1)" stroke="#0e2236" stroke-width="0.6"/><rect x="317.85" y="32.60" width="19.30" height="173.40" fill="url(#bg1)" stroke="#0e2236" stroke-width="0.6"/><rect x="338.56" y="52.00" width="19.30" height="154.00" fill="url(#bg1)" stroke="#0e2236" stroke-width="0.6"/><rect x="359.26" y="52.00" width="19.30" height="154.00" fill="url(#bg1)" stroke="#0e2236" stroke-width="0.6"/><rect x="379.96" y="32.60" width="19.30" height="173.40" fill="url(#bg1)" stroke="#0e2236" stroke-width="0.6"/><rect x="400.67" y="52.00" width="19.30" height="154.00" fill="url(#bg1)" stroke="#0e2236" stroke-width="0.6"/><rect x="421.37" y="32.60" width="19.30" height="173.40" fill="url(#bg1)" stroke="#0e2236" stroke-width="0.6"/><rect x="442.08" y="52.00" width="19.30" height="154.00" fill="url(#bg1)" stroke="#0e2236" stroke-width="0.6"/><rect x="462.78" y="32.60" width="19.30" height="173.40" fill="url(#bg1)" stroke="#0e2236" stroke-width="0.6"/><rect x="483.48" y="52.00" width="19.30" height="154.00" fill="url(#bg1)" stroke="#0e2236" stroke-width="0.6"/><rect x="504.19" y="32.60" width="19.30" height="173.40" fill="url(#bg1)" stroke="#0e2236" stroke-width="0.6"/><rect x="524.89" y="52.00" width="19.30" height="154.00" fill="url(#bg1)" stroke="#0e2236" stroke-width="0.6"/><rect x="545.60" y="52.00" width="19.30" height="154.00" fill="url(#bg1)" stroke="#0e2236" stroke-width="0.6"/><rect x="566.30" y="32.60" width="19.30" height="173.40" fill="url(#bg1)" stroke="#0e2236" stroke-width="0.6"/><rect x="587.00" y="52.00" width="19.30" height="154.00" fill="url(#bg1)" stroke="#0e2236" stroke-width="0.6"/><rect x="607.71" y="32.60" width="19.30" height="173.40" fill="url(#bg1)" stroke="#0e2236" stroke-width="0.6"/><rect x="628.41" y="52.00" width="19.30" height="154.00" fill="url(#bg1)" stroke="#0e2236" stroke-width="0.6"/><rect x="649.12" y="32.60" width="19.30" height="173.40" fill="url(#bg1)" stroke="#0e2236" stroke-width="0.6"/><rect x="669.82" y="52.00" width="19.30" height="154.00" fill="url(#bg1)" stroke="#0e2236" stroke-width="0.6"/><rect x="690.52" y="32.60" width="19.30" height="173.40" fill="url(#bg1)" stroke="#0e2236" stroke-width="0.6"/><rect x="711.23" y="52.00" width="19.30" height="154.00" fill="url(#bg1)" stroke="#0e2236" stroke-width="0.6"/><rect x="731.93" y="52.00" width="19.30" height="154.00" fill="url(#bg1)" stroke="#0e2236" stroke-width="0.6"/><rect x="752.64" y="32.60" width="19.30" height="173.40" fill="url(#bg1)" stroke="#0e2236" stroke-width="0.6"/><rect x="773.34" y="52.00" width="19.30" height="154.00" fill="url(#bg1)" stroke="#0e2236" stroke-width="0.6"/><rect x="794.04" y="32.60" width="19.30" height="173.40" fill="url(#bg2)" stroke="#0e2236" stroke-width="0.6"/><rect x="814.75" y="52.00" width="19.30" height="154.00" fill="url(#bg1)" stroke="#0e2236" stroke-width="0.6"/><rect x="835.45" y="32.60" width="19.30" height="173.40" fill="url(#bg1)" stroke="#0e2236" stroke-width="0.6"/><rect x="856.16" y="52.00" width="19.30" height="154.00" fill="url(#bg1)" stroke="#0e2236" stroke-width="0.6"/><rect x="876.86" y="32.60" width="19.30" height="173.40" fill="url(#bg1)" stroke="#0e2236" stroke-width="0.6"/><rect x="897.56" y="52.00" width="19.30" height="154.00" fill="url(#bg1)" stroke="#0e2236" stroke-width="0.6"/><rect x="918.27" y="52.00" width="19.30" height="154.00" fill="url(#bg1)" stroke="#0e2236" stroke-width="0.6"/><rect x="938.97" y="32.60" width="19.30" height="173.40" fill="url(#bg1)" stroke="#0e2236" stroke-width="0.6"/><rect x="959.68" y="52.00" width="19.30" height="154.00" fill="url(#bg1)" stroke="#0e2236" stroke-width="0.6"/><rect x="980.38" y="32.60" width="19.30" height="173.40" fill="url(#bg1)" stroke="#0e2236" stroke-width="0.6"/><rect x="1001.08" y="52.00" width="19.30" height="154.00" fill="url(#bg1)" stroke="#0e2236" stroke-width="0.6"/><rect x="1021.79" y="32.60" width="19.30" height="173.40" fill="url(#bg1)" stroke="#0e2236" stroke-width="0.6"/><rect x="1042.49" y="52.00" width="19.30" height="154.00" fill="url(#bg1)" stroke="#0e2236" stroke-width="0.6"/><rect x="1063.20" y="52.00" width="19.30" height="154.00" fill="url(#bg1)" stroke="#0e2236" stroke-width="0.6"/><rect x="1083.90" y="32.60" width="19.30" height="173.40" fill="url(#bg1)" stroke="#0e2236" stroke-width="0.6"/><rect x="1104.60" y="52.00" width="19.30" height="154.00" fill="url(#bg1)" stroke="#0e2236" stroke-width="0.6"/><rect x="1125.31" y="32.60" width="19.30" height="173.40" fill="url(#bg1)" stroke="#0e2236" stroke-width="0.6"/><rect x="1146.01" y="52.00" width="19.30" height="154.00" fill="url(#bg1)" stroke="#0e2236" stroke-width="0.6"/><rect x="1166.72" y="32.60" width="19.30" height="173.40" fill="url(#bg1)" stroke="#0e2236" stroke-width="0.6"/><rect x="1187.42" y="52.00" width="19.30" height="154.00" fill="url(#bg1)" stroke="#0e2236" stroke-width="0.6"/><rect x="1208.12" y="32.60" width="19.30" height="173.40" fill="url(#bg1)" stroke="#0e2236" stroke-width="0.6"/><rect x="1228.83" y="52.00" width="19.30" height="154.00" fill="url(#bg1)" stroke="#0e2236" stroke-width="0.6"/><rect x="1249.53" y="52.00" width="19.30" height="154.00" fill="url(#bg1)" stroke="#0e2236" stroke-width="0.6"/><rect x="1270.24" y="32.60" width="19.30" height="173.40" fill="url(#bg1)" stroke="#0e2236" stroke-width="0.6"/><rect x="1290.94" y="52.00" width="19.30" height="154.00" fill="url(#bg1)" stroke="#0e2236" stroke-width="0.6"/><rect x="1311.64" y="32.60" width="19.30" height="173.40" fill="url(#bg1)" stroke="#0e2236" stroke-width="0.6"/><rect x="1332.35" y="52.00" width="19.30" height="154.00" fill="url(#bg1)" stroke="#0e2236" stroke-width="0.6"/><rect x="1353.05" y="32.60" width="19.30" height="173.40" fill="url(#bg1)" stroke="#0e2236" stroke-width="0.6"/><rect x="1373.76" y="52.00" width="19.30" height="154.00" fill="url(#bg1)" stroke="#0e2236" stroke-width="0.6"/><rect x="1394.46" y="32.60" width="19.30" height="173.40" fill="url(#bg1)" stroke="#0e2236" stroke-width="0.6"/><rect x="1415.16" y="52.00" width="19.30" height="154.00" fill="url(#bg1)" stroke="#0e2236" stroke-width="0.6"/><rect x="1435.87" y="52.00" width="19.30" height="154.00" fill="url(#bg1)" stroke="#0e2236" stroke-width="0.6"/><rect x="1456.57" y="32.60" width="19.30" height="173.40" fill="url(#bg1)" stroke="#0e2236" stroke-width="0.6"/><rect x="1477.28" y="52.00" width="19.30" height="154.00" fill="url(#bg1)" stroke="#0e2236" stroke-width="0.6"/><rect x="1497.98" y="32.60" width="19.30" height="173.40" fill="url(#bg1)" stroke="#0e2236" stroke-width="0.6"/><rect x="1518.68" y="52.00" width="19.30" height="154.00" fill="url(#bg1)" stroke="#0e2236" stroke-width="0.6"/><rect x="1539.39" y="32.60" width="19.30" height="173.40" fill="url(#bg1)" stroke="#0e2236" stroke-width="0.6"/><rect x="1560.09" y="52.00" width="19.30" height="154.00" fill="url(#bg1)" stroke="#0e2236" stroke-width="0.6"/><rect x="1580.80" y="32.60" width="19.30" height="173.40" fill="url(#bg1)" stroke="#0e2236" stroke-width="0.6"/><rect x="1601.50" y="52.00" width="19.30" height="154.00" fill="url(#bg1)" stroke="#0e2236" stroke-width="0.6"/><rect x="1622.20" y="52.00" width="19.30" height="154.00" fill="url(#bg1)" stroke="#0e2236" stroke-width="0.6"/><rect x="1642.91" y="32.60" width="19.30" height="173.40" fill="url(#bg1)" stroke="#0e2236" stroke-width="0.6"/><rect x="1663.61" y="52.00" width="19.30" height="154.00" fill="url(#bg1)" stroke="#0e2236" stroke-width="0.6"/><rect x="1684.32" y="32.60" width="19.30" height="173.40" fill="url(#bg1)" stroke="#0e2236" stroke-width="0.6"/><rect x="1705.02" y="52.00" width="19.30" height="154.00" fill="url(#bg1)" stroke="#0e2236" stroke-width="0.6"/><rect x="1725.72" y="32.60" width="19.30" height="173.40" fill="url(#bg1)" stroke="#0e2236" stroke-width="0.6"/><rect x="1746.43" y="52.00" width="19.30" height="154.00" fill="url(#bg1)" stroke="#0e2236" stroke-width="0.6"/><rect x="1767.13" y="32.60" width="19.30" height="173.40" fill="url(#bg1)" stroke="#0e2236" stroke-width="0.6"/><rect x="1787.84" y="52.00" width="19.30" height="154.00" fill="url(#bg1)" stroke="#0e2236" stroke-width="0.6"/><rect x="1808.54" y="52.00" width="19.30" height="154.00" fill="url(#bg1)" stroke="#0e2236" stroke-width="0.6"/><rect x="1829.24" y="32.60" width="19.30" height="173.40" fill="url(#bg1)" stroke="#0e2236" stroke-width="0.6"/><rect x="1849.95" y="52.00" width="19.30" height="154.00" fill="url(#bg1)" stroke="#0e2236" stroke-width="0.6"/><rect x="1870.65" y="32.60" width="19.30" height="173.40" fill="url(#bg1)" stroke="#0e2236" stroke-width="0.6"/><rect x="1891.36" y="52.00" width="19.30" height="154.00" fill="url(#bg1)" stroke="#0e2236" stroke-width="0.6"/><rect x="1912.06" y="32.60" width="19.30" height="173.40" fill="url(#bg1)" stroke="#0e2236" stroke-width="0.6"/><rect x="1932.76" y="52.00" width="19.30" height="154.00" fill="url(#bg1)" stroke="#0e2236" stroke-width="0.6"/><rect x="1953.47" y="42.30" width="19.30" height="163.70" fill="url(#bg1)" stroke="#0e2236" stroke-width="0.6"/><rect x="1974.17" y="42.30" width="19.30" height="163.70" fill="url(#bg1)" stroke="#0e2236" stroke-width="0.6"/><rect x="1994.88" y="52.00" width="19.30" height="154.00" fill="url(#bg1)" stroke="#0e2236" stroke-width="0.6"/><rect x="2015.58" y="32.60" width="19.30" height="173.40" fill="url(#bg1)" stroke="#0e2236" stroke-width="0.6"/><rect x="2036.28" y="52.00" width="19.30" height="154.00" fill="url(#bg1)" stroke="#0e2236" stroke-width="0.6"/><rect x="2056.99" y="32.60" width="19.30" height="173.40" fill="url(#bg1)" stroke="#0e2236" stroke-width="0.6"/><rect x="2077.69" y="52.00" width="4.31" height="154.00" fill="url(#bg1)" stroke="#0e2236" stroke-width="0.6"/><rect x="43.5" y="14" width="2" height="199" fill="#cfd2d6"/><rect x="43.5" y="205.5" width="2037.5" height="2" fill="#cfd2d6"/><rect x="108.55" y="207" width="1.5" height="6" fill="#cfd2d6"/><text x="109.30" y="226.70" font-size="13" fill="#d6d8db" text-anchor="middle" font-family="Liberation Sans">12 PM</text><rect x="356.75" y="207" width="1.5" height="6" fill="#cfd2d6"/><text x="357.50" y="226.70" font-size="13" fill="#d6d8db" text-anchor="middle" font-family="Liberation Sans">Aug 25</text><rect x="604.75" y="207" width="1.5" height="6" fill="#cfd2d6"/><text x="605.50" y="226.70" font-size="13" fill="#d6d8db" text-anchor="middle" font-family="Liberation Sans">12 PM</text><rect x="852.65" y="207" width="1.5" height="6" fill="#cfd2d6"/><text x="853.40" y="226.70" font-size="13" fill="#d6d8db" text-anchor="middle" font-family="Liberation Sans">Mon 26</text><rect x="1101.25" y="207" width="1.5" height="6" fill="#cfd2d6"/><text x="1102.00" y="226.70" font-size="13" fill="#d6d8db" text-anchor="middle" font-family="Liberation Sans">12 PM</text><rect x="1349.25" y="207" width="1.5" height="6" fill="#cfd2d6"/><text x="1350.00" y="226.70" font-size="13" fill="#d6d8db" text-anchor="middle" font-family="Liberation Sans">Tue 27</text><rect x="1598.25" y="207" width="1.5" height="6" fill="#cfd2d6"/><text x="1599.00" y="226.70" font-size="13" fill="#d6d8db" text-anchor="middle" font-family="Liberation Sans">12 PM</text><rect x="1846.25" y="207" width="1.5" height="6" fill="#cfd2d6"/><text x="1847.00" y="226.70" font-size="13" fill="#d6d8db" text-anchor="middle" font-family="Liberation Sans">Wed 28</text><rect x="2080" y="207" width="1.5" height="6" fill="#cfd2d6"/><text x="29.5" y="17.60" font-size="13" fill="#d6d8db" text-anchor="end" font-family="Liberation Sans">40</text><text x="29.5" y="66.00" font-size="13" fill="#d6d8db" text-anchor="end" font-family="Liberation Sans">30</text><text x="29.5" y="114.00" font-size="13" fill="#d6d8db" text-anchor="end" font-family="Liberation Sans">20</text><text x="29.5" y="162.30" font-size="13" fill="#d6d8db" text-anchor="end" font-family="Liberation Sans">10</text><text x="29.5" y="210.40" font-size="13" fill="#d6d8db" text-anchor="end" font-family="Liberation Sans">0</text></svg><div style="position:absolute;left:783.8px;top:267px;width:167px;height:105.5px;box-sizing:border-box;border:2px solid #17969a;border-radius:5px;background:#172030"></div><div class="t" style="left:794px;top:276.83px;font-size:15.8px;color:#c8c8c8;font-weight:400;letter-spacing:-0.1px;-webkit-text-stroke:0.25px #172030;">08/25/2024 09:00 pm</div><div style="position:absolute;left:794px;top:296.8px;width:147px;height:2.4px;background:#17969a"></div><div class="t" style="left:867.5px;transform:translateX(-50%);top:308.91px;font-size:30px;color:#c9c9c9;font-weight:400;letter-spacing:0px;">36</div><div class="t" style="left:867.5px;transform:translateX(-50%);top:348.35px;font-size:15.3px;color:#c4c4c4;font-weight:400;letter-spacing:0px;">Event Count</div><svg style="position:absolute;left:855px;top:371px;" width="25" height="13" viewBox="0 0 25 13"><polygon points="0.5,0.5 24.5,0.5 12.5,12" fill="#158d8e"/></svg><div style="position:absolute;left:743px;top:227px;width:268px;height:395px;box-sizing:border-box;border:3px solid #e8403f"></div><div style="position:absolute;left:2091.2px;top:300px;width:50.5px;height:44.8px;box-sizing:border-box;border:3px solid #e8403f"></div><svg style="position:absolute;left:2058.1px;top:306.2px;" width="26.6" height="26.6" viewBox="0 0 26.6 26.6"><path d="M14.16 5.52 L15.70 3.28 L18.68 4.52 L18.19 7.19 L19.41 8.41 L22.08 7.92 L23.32 10.90 L21.08 12.44 L21.08 14.16 L23.32 15.70 L22.08 18.68 L19.41 18.19 L18.19 19.41 L18.68 22.08 L15.70 23.32 L14.16 21.08 L12.44 21.08 L10.90 23.32 L7.92 22.08 L8.41 19.41 L7.19 18.19 L4.52 18.68 L3.28 15.70 L5.52 14.16 L5.52 12.44 L3.28 10.90 L4.52 7.92 L7.19 8.41 L8.41 7.19 L7.92 4.52 L10.90 3.28 L12.44 5.52 Z" fill="none" stroke="#5cd3c8" stroke-width="1.5" stroke-linejoin="round"/><circle cx="13.3" cy="13.3" r="4.33" fill="none" stroke="#5cd3c8" stroke-width="1.5"/></svg><svg style="position:absolute;left:2102px;top:311px;" width="27" height="17" viewBox="0 0 27 17"><polyline points="2.5,14.5 13.5,3 24.5,14.5" fill="none" stroke="#5cd3c8" stroke-width="1.6"/></svg><div class="t" style="left:11px;top:641.15px;font-size:21.8px;color:#a0a0a0;font-weight:300;letter-spacing:0px;-webkit-text-stroke:0.45px #020b1a;">5,000 Events</div><svg style="position:absolute;left:141px;top:638px;" width="26" height="25" viewBox="0 0 26 25"><path d="M12.6 3.2 L22.6 21.5 H2.6 Z" fill="none" stroke="#e8a33a" stroke-width="1.5" stroke-linejoin="round"/><line x1="12.6" y1="9" x2="12.6" y2="15.5" stroke="#e8a33a" stroke-width="1.6"/><circle cx="12.6" cy="18.5" r="1.1" fill="#e8a33a"/></svg><svg style="position:absolute;left:193px;top:634px;" width="161" height="38" viewBox="0 0 161 38"><rect x="0.75" y="0.75" width="159.5" height="36.5" fill="none" stroke="#17969a" stroke-width="1.5"/></svg><svg style="position:absolute;left:206px;top:644px;" width="21" height="20" viewBox="0 0 21 20"><path d="M2 2.5 H18 L11.5 10 V17.5 L8.5 15.5 V10 Z" fill="none" stroke="#5cd3c8" stroke-width="1.5" stroke-linejoin="round"/></svg><div class="t" style="left:238.2px;top:645.43px;font-size:17.45px;color:#5cd3c8;font-weight:400;letter-spacing:0px;">Events Meta</div><svg style="position:absolute;left:364px;top:634px;" width="185" height="38" viewBox="0 0 185 38"><rect x="0.75" y="0.75" width="183.5" height="36.5" fill="none" stroke="#17969a" stroke-width="1.5"/></svg><svg style="position:absolute;left:374px;top:644px;" width="21" height="20" viewBox="0 0 21 20"><g fill="none" stroke="#5cd3c8" stroke-width="1.4"><rect x="2.3" y="1.8" width="3.4" height="15.8" rx="1.7"/><rect x="8.3" y="1.8" width="3.4" height="15.8" rx="1.7"/><rect x="14.3" y="1.8" width="3.4" height="15.8" rx="1.7"/></g></svg><div class="t" style="left:403.6px;top:645.32px;font-size:17.1px;color:#5cd3c8;font-weight:400;letter-spacing:0px;">Summary List</div><svg style="position:absolute;left:518.5px;top:648.1px;" width="20" height="13" viewBox="0 0 20 13"><polyline points="2,2 10.0,11 18,2" fill="none" stroke="#5cd3c8" stroke-width="1.5"/></svg><svg style="position:absolute;left:558px;top:634px;" width="262" height="38" viewBox="0 0 262 38"><rect x="0.75" y="0.75" width="260.5" height="36.5" fill="none" stroke="#17969a" stroke-width="1.5"/></svg><div class="t" style="left:577.8px;top:644.65px;font-size:17.9px;color:#5cd3c8;font-weight:400;letter-spacing:0px;">Download All</div><svg style="position:absolute;left:789.5px;top:647.8px;" width="20" height="13" viewBox="0 0 20 13"><polyline points="2,2 10.0,11 18,2" fill="none" stroke="#5cd3c8" stroke-width="1.5"/></svg><svg style="position:absolute;left:830px;top:634px;" width="277" height="38" viewBox="0 0 277 38"><rect x="0.75" y="0.75" width="275.5" height="36.5" fill="none" stroke="#39414d" stroke-width="1.5"/></svg><div style="position:absolute;left:1068.5px;top:634px;width:1.5px;height:38px;background:#39414d"></div><div class="t" style="left:842.3px;top:644.52px;font-size:17.7px;color:#6d7178;font-weight:400;letter-spacing:0px;">Create Incident</div><svg style="position:absolute;left:1079.45px;top:648.9499999999999px;" width="15.5" height="9.7" viewBox="0 0 15.5 9.7"><polyline points="2,2 7.75,7.7 13.5,2" fill="none" stroke="#6d7178" stroke-width="1.3"/></svg><div style="position:absolute;left:1126.5px;top:643px;width:36px;height:19.6px;border-radius:9.8px;background:#4a525e"></div><div style="position:absolute;left:1126.5px;top:643px;width:20px;height:19.6px;border-radius:50%;background:#464646"></div><div class="t" style="left:1173px;top:646.60px;font-size:13px;color:#5f6570;font-weight:700;letter-spacing:0.5px;">GROUP EVENTS</div><svg style="position:absolute;left:2125px;top:636px;" width="25" height="25" viewBox="0 0 25 25"><circle cx="10.5" cy="10.5" r="7" fill="none" stroke="#c0c0c0" stroke-width="1.6"/><line x1="15.5" y1="15.5" x2="20.5" y2="20.5" stroke="#c0c0c0" stroke-width="1.6"/></svg><svg style="position:absolute;left:0px;top:0px;pointer-events:none" width="2166" height="979" viewBox="0 0 2166 979"><rect x="0" y="682.8" width="2166" height="1.4" fill="#39414d"/><rect x="10" y="721.6" width="2116" height="1.4" fill="#39414d"/><rect x="52" y="684" width="1.2" height="38" fill="#39414d"/><rect x="326" y="684" width="1.2" height="38" fill="#39414d"/><rect x="409.5" y="684" width="1.2" height="38" fill="#39414d"/><rect x="557" y="684" width="1.2" height="38" fill="#39414d"/><rect x="704" y="684" width="1.2" height="38" fill="#39414d"/><rect x="10" y="796.70" width="2148" height="1.4" fill="#39414d"/><rect x="10" y="871.50" width="2148" height="1.4" fill="#39414d"/><rect x="10" y="946.30" width="2148" height="1.4" fill="#39414d"/></svg><svg style="position:absolute;left:2125.5px;top:682.8px;" width="40" height="40.6" viewBox="0 0 40 40.6"><rect x="0.7" y="0.7" width="38.6" height="39.2" fill="none" stroke="#39414d" stroke-width="1.4"/></svg><svg style="position:absolute;left:2134.4px;top:692.2px;" width="22.8" height="22.8" viewBox="0 0 22.8 22.8"><path d="M12.10 5.05 L13.36 3.23 L15.79 4.24 L15.39 6.42 L16.38 7.41 L18.56 7.01 L19.57 9.44 L17.75 10.70 L17.75 12.10 L19.57 13.36 L18.56 15.79 L16.38 15.39 L15.39 16.38 L15.79 18.56 L13.36 19.57 L12.10 17.75 L10.70 17.75 L9.44 19.57 L7.01 18.56 L7.41 16.38 L6.42 15.39 L4.24 15.79 L3.23 13.36 L5.05 12.10 L5.05 10.70 L3.23 9.44 L4.24 7.01 L6.42 7.41 L7.41 6.42 L7.01 4.24 L9.44 3.23 L10.70 5.05 Z" fill="none" stroke="#3cc4bb" stroke-width="1.4" stroke-linejoin="round"/><circle cx="11.4" cy="11.4" r="3.53" fill="none" stroke="#3cc4bb" stroke-width="1.4"/></svg><svg style="position:absolute;left:22px;top:696px;" width="12.6" height="12.6" viewBox="0 0 12.6 12.6"><rect x="0.8" y="0.8" width="11.0" height="11.0" fill="none" stroke="#aeb1b6" stroke-width="1.6"/></svg><div class="t" style="left:62px;top:696.86px;font-size:13.4px;color:#b9b9b9;font-weight:700;letter-spacing:0.45px;">COLLECTION TIME</div><div class="t" style="left:336px;top:697.26px;font-size:13.4px;color:#b9b9b9;font-weight:700;letter-spacing:0.45px;">TYPE</div><div class="t" style="left:420px;top:697.26px;font-size:13.4px;color:#b9b9b9;font-weight:700;letter-spacing:0.45px;">THEME</div><div class="t" style="left:566.8px;top:697.26px;font-size:13.4px;color:#b9b9b9;font-weight:700;letter-spacing:0.45px;">SIZE</div><div class="t" style="left:714px;top:697.26px;font-size:13.4px;color:#b9b9b9;font-weight:700;letter-spacing:0.45px;">SUMMARY</div><svg style="position:absolute;left:23px;top:740.1px;" width="13" height="13" viewBox="0 0 13 13"><rect x="0.8" y="0.8" width="11.4" height="11.4" fill="none" stroke="#aeb1b6" stroke-width="1.6"/></svg><div class="t" style="left:63.6px;top:739.04px;font-size:15.55px;color:#dedede;font-weight:400;letter-spacing:0px;">08/21/2024 05:14:11 am</div><svg style="position:absolute;left:340px;top:736.9px;" width="20" height="20" viewBox="0 0 20 20"><circle cx="10" cy="10" r="8.6" fill="none" stroke="#dedede" stroke-width="1.2"/><path d="M7 7.3 H13.2 M11.3 5.1 L13.5 7.3 L11.3 9.5 M12.6 13.1 H6 M7.9 10.9 L5.7 13.1 L7.9 15.3" fill="none" stroke="#dedede" stroke-width="1.2" stroke-linejoin="round" stroke-linecap="round"/></svg><div class="t" style="left:421px;top:738.99px;font-size:15.6px;color:#dedede;font-weight:400;letter-spacing:-0.5px;">0 [OTHER]</div><div class="t" style="left:571.2px;top:739.05px;font-size:15.0px;color:#dedede;font-weight:400;letter-spacing:0px;">62 bytes</div><div class="t" style="left:720.9px;top:739.40px;font-size:15.12px;color:#dedede;font-weight:400;letter-spacing:0px;">ipv6.src=fe80:0:0:0:e2e1:79cf:c744:a1c8 |&nbsp; ipv6.dst=ff02:0:0:0:0:0:0:2 |&nbsp; service=0 [OTHER]</div><svg style="position:absolute;left:23px;top:815.0px;" width="13" height="13" viewBox="0 0 13 13"><rect x="0.8" y="0.8" width="11.4" height="11.4" fill="none" stroke="#aeb1b6" stroke-width="1.6"/></svg><div class="t" style="left:63.6px;top:813.94px;font-size:15.55px;color:#dedede;font-weight:400;letter-spacing:0px;">08/21/2024 05:19:13 am</div><svg style="position:absolute;left:340px;top:811.8px;" width="20" height="20" viewBox="0 0 20 20"><circle cx="10" cy="10" r="8.6" fill="none" stroke="#dedede" stroke-width="1.2"/><path d="M7 7.3 H13.2 M11.3 5.1 L13.5 7.3 L11.3 9.5 M12.6 13.1 H6 M7.9 10.9 L5.7 13.1 L7.9 15.3" fill="none" stroke="#dedede" stroke-width="1.2" stroke-linejoin="round" stroke-linecap="round"/></svg><div class="t" style="left:421px;top:813.89px;font-size:15.6px;color:#dedede;font-weight:400;letter-spacing:-0.5px;">0 [OTHER]</div><div class="t" style="left:571.2px;top:813.95px;font-size:15.0px;color:#dedede;font-weight:400;letter-spacing:0px;">258 bytes</div><div class="t" style="left:720.9px;top:814.30px;font-size:15.12px;color:#dedede;font-weight:400;letter-spacing:0px;">ipv6.src=0:0:0:0:0:0:0:0 |&nbsp; ipv6.dst=ff02:0:0:0:0:1:ff44:a1c8 |&nbsp; service=0 [OTHER]</div><svg style="position:absolute;left:23px;top:889.9000000000001px;" width="13" height="13" viewBox="0 0 13 13"><rect x="0.8" y="0.8" width="11.4" height="11.4" fill="none" stroke="#aeb1b6" stroke-width="1.6"/></svg><div class="t" style="left:63.6px;top:888.84px;font-size:15.55px;color:#dedede;font-weight:400;letter-spacing:0px;">08/21/2024 05:19:14 am</div><svg style="position:absolute;left:340px;top:886.7px;" width="20" height="20" viewBox="0 0 20 20"><circle cx="10" cy="10" r="8.6" fill="none" stroke="#dedede" stroke-width="1.2"/><path d="M7 7.3 H13.2 M11.3 5.1 L13.5 7.3 L11.3 9.5 M12.6 13.1 H6 M7.9 10.9 L5.7 13.1 L7.9 15.3" fill="none" stroke="#dedede" stroke-width="1.2" stroke-linejoin="round" stroke-linecap="round"/></svg><div class="t" style="left:421px;top:888.79px;font-size:15.6px;color:#dedede;font-weight:400;letter-spacing:-0.5px;">0 [OTHER]</div><div class="t" style="left:571.2px;top:888.85px;font-size:15.0px;color:#dedede;font-weight:400;letter-spacing:0px;">540 bytes</div><div class="t" style="left:720.9px;top:889.20px;font-size:15.12px;color:#dedede;font-weight:400;letter-spacing:0px;">ipv6.src=fe80:0:0:0:e2e1:79cf:c744:a1c8 |&nbsp; ipv6.dst=ff02:0:0:0:0:0:0:16 |&nbsp; service=0 [OTHER]</div><svg style="position:absolute;left:23px;top:964.8000000000001px;" width="13" height="13" viewBox="0 0 13 13"><rect x="0.8" y="0.8" width="11.4" height="11.4" fill="none" stroke="#aeb1b6" stroke-width="1.6"/></svg><div class="t" style="left:63.6px;top:963.74px;font-size:15.55px;color:#dedede;font-weight:400;letter-spacing:0px;">08/21/2024 05:19:15 am</div><svg style="position:absolute;left:340px;top:961.6px;" width="20" height="20" viewBox="0 0 20 20"><circle cx="10" cy="10" r="8.6" fill="none" stroke="#dedede" stroke-width="1.2"/><path d="M7 7.3 H13.2 M11.3 5.1 L13.5 7.3 L11.3 9.5 M12.6 13.1 H6 M7.9 10.9 L5.7 13.1 L7.9 15.3" fill="none" stroke="#dedede" stroke-width="1.2" stroke-linejoin="round" stroke-linecap="round"/></svg><div class="t" style="left:421px;top:963.69px;font-size:15.6px;color:#dedede;font-weight:400;letter-spacing:-0.5px;">0 [OTHER]</div><div class="t" style="left:571.2px;top:963.75px;font-size:15.0px;color:#dedede;font-weight:400;letter-spacing:0px;">620 bytes</div><div class="t" style="left:720.9px;top:964.10px;font-size:15.12px;color:#dedede;font-weight:400;letter-spacing:0px;">ipv6.src=fe80:0:0:0:e2e1:79cf:c744:a1c8 |&nbsp; ipv6.dst=ff02:0:0:0:0:0:0:2 |&nbsp; service=0 [OTHER]</div><div style="position:absolute;left:2159px;top:722px;width:7px;height:23px;border-radius:0 0 3.5px 3.5px;background:#3a414b"></div><div style="position:absolute;left:0px;top:970.3px;width:1427.5px;height:8.7px;border-radius:4.3px;background:#3f4650"></div><div style="position:absolute;left:2089.7px;top:817.2px;width:64px;height:64px;border-radius:50%;background:#ffffff;box-shadow:0 0 3px rgba(160,160,160,0.5)"></div><svg style="position:absolute;left:2101px;top:828px;" width="44" height="44" viewBox="0 0 44 44">
<g stroke="#cf3a30" stroke-width="1.6" fill="none">
<line x1="8.5" y1="6.5" x2="21.4" y2="23.8"/><line x1="35.3" y1="13.8" x2="21.4" y2="23.8"/><line x1="22.2" y1="15.7" x2="21.4" y2="23.8"/>
<line x1="9.3" y1="29.3" x2="21.4" y2="23.8"/><line x1="31.7" y1="28.5" x2="21.4" y2="23.8"/><line x1="23.2" y1="35.9" x2="21.4" y2="23.8"/>
</g>
<circle cx="21.4" cy="23.8" r="3.4" fill="#ffffff" stroke="#cf3a30" stroke-width="2"/>
<g fill="#cf3a30"><circle cx="8.5" cy="6.5" r="3.8"/><circle cx="35.3" cy="13.8" r="2.5"/><circle cx="22.2" cy="15.7" r="2.2"/>
<circle cx="9.3" cy="29.3" r="3.8"/><circle cx="31.7" cy="28.5" r="2.1"/><circle cx="23.2" cy="35.9" r="2.9"/></g></svg>
</body></html>
